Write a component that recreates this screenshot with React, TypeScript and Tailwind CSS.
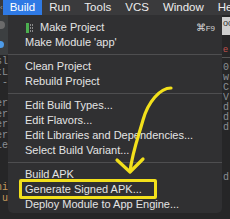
import React from 'react'

const font = { fontFamily: '"Liberation Sans", Arial, sans-serif' }

type Item = { label: string; sep?: false; icon?: boolean; shortcut?: boolean } | { sep: true }

const items: Item[] = [
    { label: 'Make Project', icon: true, shortcut: true },
    { label: "Make Module 'app'" },
    { sep: true },
    { label: 'Clean Project' },
    { label: 'Rebuild Project' },
    { sep: true },
    { label: 'Edit Build Types...' },
    { label: 'Edit Flavors...' },
    { label: 'Edit Libraries and Dependencies...' },
    { label: 'Select Build Variant...' },
    { sep: true },
    { label: 'Build APK' },
    { label: 'Generate Signed APK...' },
    { label: 'Deploy Module to App Engine...' },
]

function MakeIcon() {
    return (
        <svg width="12" height="10" viewBox="0 0 12 10" className="mr-[3px]">
            <rect x="1" y="0" width="3" height="10" fill="#4caf50" />
            <rect x="5" y="1" width="1" height="2" fill="#8a8a8a" />
            <rect x="7" y="1" width="1" height="2" fill="#8a8a8a" />
            <rect x="5" y="4" width="1" height="2" fill="#8a8a8a" />
            <rect x="7" y="4" width="1" height="2" fill="#8a8a8a" />
            <rect x="5" y="7" width="1" height="2" fill="#8a8a8a" />
            <rect x="7" y="7" width="1" height="2" fill="#8a8a8a" />
        </svg>
    )
}

export default function App() {
    const leftLines = ['sl', 'tL', '-', '', 'er', 'er', 'er', 'er', 'Le', '', '', '', 'ni', 'u']
    const rightLines = ['0', 'w', 'C', 'V', 'd', 'd', 'd', '', '', '', '', 'd']

    return (
        <div className="relative w-[230px] h-[219px] overflow-hidden bg-[#262627]" style={font}>
            {/* menu bar */}
            <div className="flex h-[15px] bg-[#3a3a3c] text-[11.5px] leading-[15px] text-[#ececec]">
                <div className="w-[8px] text-[#9a9a9a] text-[8px]">‹</div>
                <div className="px-[7px] bg-[#2f7ae5] text-white">Build</div>
                <div className="px-[7px]">Run</div>
                <div className="px-[7px]">Tools</div>
                <div className="px-[7px]">VCS</div>
                <div className="px-[7px]">Window</div>
                <div className="px-[7px] whitespace-nowrap">Help</div>
            </div>

            <div className="flex h-[204px]">
                {/* left editor strip */}
                <div className="w-[8px] flex flex-col overflow-hidden">
                    <div className="h-[40px] bg-[#3c3f41] flex flex-col items-start pt-[6px] gap-[12px]">
                        <div className="w-[5px] h-[8px] bg-[#6b6b6b] rounded-r-sm" />
                        <div className="w-[4px] h-[7px] bg-[#4d9be8] rounded-r-full" />
                    </div>
                    <div className="flex flex-col items-end text-[10px] leading-[10.5px] text-[#8a8f94] font-mono pt-[2px]">
                        {leftLines.map((t, i) => (
                            <div key={i} className={`h-[10.5px] whitespace-nowrap ${t === 'ni' || t === 'u' ? 'text-[#c59a5d]' : ''}`}>{t}</div>
                        ))}
                    </div>
                </div>

                {/* dropdown */}
                <div className="w-[214px] h-[198px] bg-[#303032] rounded-b-[5px] pt-[5px] text-[11px] text-[#e4e4e4]">
                    {items.map((it, i) =>
                        it.sep ? (
                            <div key={i} className="h-[9px] flex items-center">
                                <div className="w-full h-px bg-[#4e4e50]" />
                            </div>
                        ) : (
                            <div key={i} className="h-[15px] flex items-center pl-[17px] pr-[7px] whitespace-nowrap">
                                {it.icon && <MakeIcon />}
                                <span>{it.label}</span>
                                {it.shortcut && (
                                    <span className="ml-auto text-[#d8d8d8] flex items-baseline">
                                        <span className="text-[10px]">⌘</span>
                                        <span className="text-[8px]">F9</span>
                                    </span>
                                )}
                            </div>
                        )
                    )}
                </div>

                {/* right editor strip */}
                <div className="w-[8px] flex flex-col overflow-hidden">
                    <div className="h-[18px] bg-[#cfcfcf] mt-[2px] text-[9px] text-[#333] pl-[1px]">oc</div>
                    <div className="h-[12px] text-[9px] text-[#c0504d] pl-[1px] mt-[8px]">e</div>
                    <div className="h-px bg-[#555] mt-[2px]" />
                    <div className="flex flex-col text-[10px] leading-[10px] text-[#8a8f94] font-mono pl-[1px] pt-[5px]">
                        {rightLines.map((t, i) => (
                            <div key={i} className="h-[10px]">{t}</div>
                        ))}
                    </div>
                </div>
            </div>

            {/* annotation overlays */}
            <div className="absolute left-[19px] top-[179px] w-[138px] h-[20px] border-[3px] border-[#f2e01b] rounded-[2px]" />
            <svg className="absolute left-0 top-0 pointer-events-none" width="230" height="219" viewBox="0 0 230 219">
                <path
                    d="M171 88 C 160 88, 148 102, 143 120 C 138 138, 133 150, 130 171"
                    fill="none"
                    stroke="#f2e01b"
                    strokeWidth="3.2"
                    strokeLinecap="round"
                />
                <path
                    d="M117 160 L130 172 L143 159"
                    fill="none"
                    stroke="#f2e01b"
                    strokeWidth="3.2"
                    strokeLinecap="round"
                    strokeLinejoin="round"
                />
            </svg>
        </div>
    )
}
